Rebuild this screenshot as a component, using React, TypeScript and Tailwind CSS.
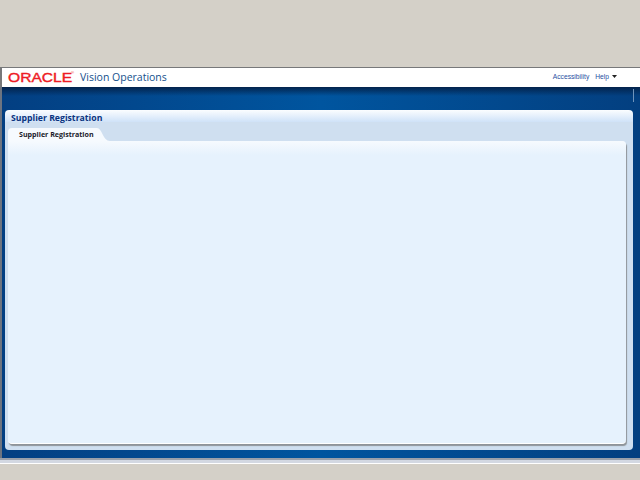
export default function App() {
  return (
    <div className="w-[640px] h-[480px] flex flex-col bg-[#d4d0c8] overflow-hidden font-['Liberation_Sans',Arial,sans-serif]">
      <div className="h-[67px] shrink-0" />
      {/* Branding bar */}
      <div className="h-[20px] shrink-0 bg-white border-t border-t-[#77787a] border-l-2 border-l-[#77787a] flex items-center pl-[6px] pr-[23px] pb-[1px]">
        <span className="relative w-[65px] text-[#ee1c25] text-[13px] leading-none [-webkit-text-stroke:0.4px_#ee1c25] origin-left scale-x-[1.2] whitespace-nowrap">
          ORACLE
        </span>
        <span className="-ml-[2px] w-[9px] h-[12px] text-[#ee1c25] text-[4px] leading-none">®</span>
        <span className="text-[10.5px] leading-none text-[#14508c] font-['Open_Sans',sans-serif]">Vision Operations</span>
        <div className="ml-auto flex items-center text-[6.7px] text-[#1f4f9f]">
          <span>Accessibility</span>
          <span className="ml-[6px]">Help</span>
          <svg className="ml-[3px]" width="5" height="3" viewBox="0 0 5 3">
            <path d="M0 0h5L2.5 3z" fill="#222" />
          </svg>
        </div>
      </div>
      {/* Blue body */}
      <div className="h-[371px] shrink-0 flex flex-col bg-gradient-to-r from-[#033f82] via-[#00559f] to-[#033f80] border-l-2 border-l-[#6d7480]">
        <div className="h-[23px] shrink-0 flex justify-end pr-[6px] relative">
          <div className="absolute inset-x-0 top-0 h-[9px] bg-gradient-to-b from-[#03234c] to-transparent" />
          <div className="w-px h-[13px] mt-[2px] bg-[#6f93bb] relative" />
        </div>
        <div className="ml-[3px] mr-[7px] h-[340px] rounded-[4px] bg-gradient-to-b from-[#fbfdff] to-[#cfe2f8] [background-size:100%_12px] bg-no-repeat bg-[#cfdff0] flex flex-col">
          <div className="h-[18px] shrink-0 pl-[6px] pt-[2px] text-[8.7px] leading-[13px] font-bold text-[#0a3480] font-['Open_Sans',sans-serif] whitespace-nowrap">
            Supplier Registration
          </div>
          <div className="relative h-[13px] shrink-0 pl-[11px] w-[89px] ml-[3px] bg-[#f6fafe] rounded-tl-[4px] text-[7.1px] leading-[13px] font-bold text-[#1a1a2a] font-['Open_Sans',sans-serif] whitespace-nowrap">
            Supplier Registration
            <svg className="absolute top-0 -right-[13px]" width="13" height="13" viewBox="0 0 13 13">
              <path d="M0 0C5 0 6 13 13 13H0z" fill="#f6fafe" />
            </svg>
          </div>
          <div className="ml-[3px] mr-[7px] mb-[6px] flex-1 rounded-tr-[4px] rounded-b-[4px] bg-gradient-to-b from-[#f6fafe] to-[#e6f2fd] [background-size:100%_14px] bg-no-repeat bg-[#e6f2fd] border-b border-white shadow-[1px_2px_1px_#8e9499]" />
        </div>
      </div>
      {/* Bottom strip */}
      <div className="h-[2px] shrink-0 bg-[#9aa0aa]" />
      <div className="h-[3px] shrink-0 bg-[#d3d8e2]" />
      <div className="h-px shrink-0 bg-white" />
    </div>
  );
}
